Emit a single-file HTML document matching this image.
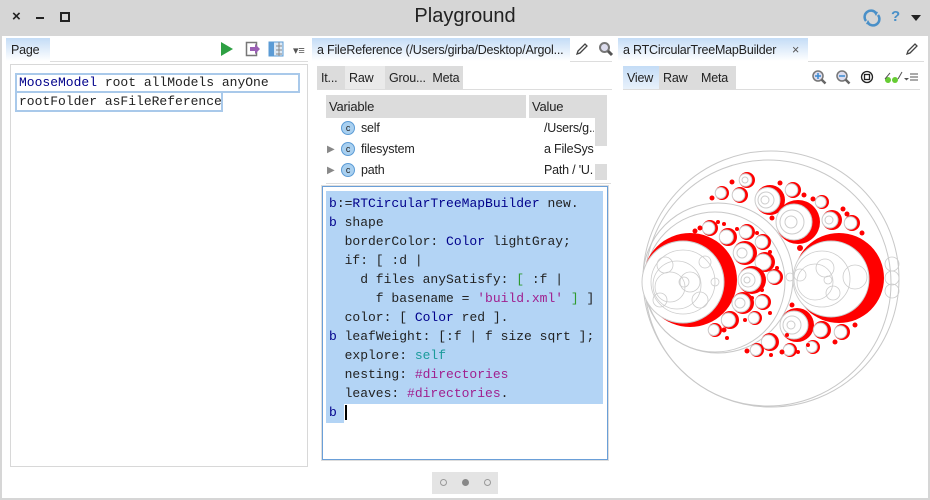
<!DOCTYPE html>
<html><head><meta charset="utf-8">
<style>
*{margin:0;padding:0;box-sizing:border-box}
body{width:930px;height:500px;overflow:hidden;background:#fff;font-family:"Liberation Sans","DejaVu Sans",sans-serif;position:relative;font-size:13px;color:#222;letter-spacing:-0.2px}
.abs{position:absolute;white-space:nowrap}
.tb{left:0;top:0;width:930px;height:36px;background:#d6d6d6}
.title{left:0;width:930px;top:5px;text-align:center;font-size:20px;color:#222;letter-spacing:0}
.frame{border:2px solid #d6d6d6;border-top:none;left:0;top:36px;width:930px;height:464px}
.tab{background:linear-gradient(#c4dcf6,#fff);height:23px;font-size:12.5px;padding:5px 0 0 5px;white-space:nowrap;overflow:hidden}
.hl{height:1px;background:#ddd}
.sub{height:23px;font-size:12.5px;padding:5px 4px 0;background:#dcdcdc;white-space:nowrap;overflow:hidden}
.mono{font-family:"Liberation Mono","DejaVu Sans Mono",monospace;font-size:13px;letter-spacing:0}
.code div{height:19px;line-height:19px;white-space:pre}
.k{color:#00008b}.g{color:#2e9a2e}.m{color:#a0208f}.t{color:#1b9b9b}
.val{position:absolute;left:218px;width:50px;overflow:hidden;white-space:nowrap}
</style></head><body>
<div class="abs tb"></div>
<div class="abs title">Playground</div>
<div class="abs" style="left:12px;top:8px;font-size:15px;font-weight:bold">×</div>
<div class="abs" style="left:36px;top:17px;width:8px;height:2px;background:#222"></div>
<div class="abs" style="left:60px;top:12px;width:10px;height:10px;border:2px solid #222"></div>
<svg class="abs" style="left:862px;top:9px" width="20" height="18"><path d="M4 12 A6 6 0 0 1 14 4 M16 6 A6 6 0 0 1 6 14" stroke="#4a90c8" stroke-width="2.5" fill="none"/><path d="M11 2 l5 1 -2 4z M9 16 l-5 -1 2 -4z" fill="#4a90c8"/></svg>
<div class="abs" style="left:891px;top:8px;font-size:15px;color:#4a90c8;font-weight:bold">?</div>
<div class="abs" style="left:911px;top:15px;width:0;height:0;border-left:5px solid transparent;border-right:5px solid transparent;border-top:6px solid #222"></div>
<div class="abs frame"></div>

<!-- left pane -->
<div class="abs tab" style="left:6px;top:38px;width:44px">Page</div>
<div class="abs hl" style="left:50px;top:61px;width:258px"></div>
<svg class="abs" style="left:219px;top:41px" width="16" height="16"><path d="M2 1 L14 8 L2 15z" fill="#2ea043"/></svg>
<svg class="abs" style="left:245px;top:41px" width="16" height="16"><rect x="1.5" y="1.5" width="10" height="13" fill="none" stroke="#777" stroke-width="1.5"/><path d="M5 6h5v-3l5 5-5 5v-3h-5z" fill="#9a5fb4"/></svg>
<svg class="abs" style="left:268px;top:41px" width="16" height="16"><rect x="1" y="1" width="14" height="14" fill="#dce8f4" stroke="#5b9bd5"/><rect x="1" y="1" width="5" height="14" fill="#5b9bd5"/><path d="M8 5h6M8 9h6M8 13h6M11 1v14" stroke="#888"/></svg>
<div class="abs" style="left:293px;top:44px;font-size:11px;color:#555">▾≡</div>
<div class="abs" style="left:10px;top:64px;width:298px;height:403px;border:1px solid #d8d8d8"></div>
<div class="abs mono code" style="left:15px;top:73px">
<div style="border:2px solid #a9c9ea;width:285px;height:20px;line-height:16px;padding-left:2px"><span class="k">MooseModel</span> root allModels anyOne</div>
<div style="border:2px solid #a9c9ea;border-top:none;width:208px;height:19px;line-height:17px;padding-left:2px">rootFolder asFileReference</div>
</div>

<!-- middle pane -->
<div class="abs tab" style="left:312px;top:38px;width:258px">a FileReference (/Users/girba/Desktop/Argol...</div>
<svg class="abs" style="left:575px;top:42px" width="14" height="14"><path d="M2 12 L3 9 L10 2 L12 4 L5 11z" fill="none" stroke="#444" stroke-width="1.3"/></svg>
<svg class="abs" style="left:598px;top:41px" width="16" height="16"><circle cx="6.5" cy="6.5" r="4.5" fill="#dde" stroke="#777" stroke-width="2"/><path d="M10 10 L14 14" stroke="#555" stroke-width="3"/></svg>
<div class="abs hl" style="left:570px;top:61px;width:42px"></div>
<div class="abs sub" style="left:317px;top:66px;width:28px">It...</div>
<div class="abs sub" style="left:345px;top:66px;width:40px;background:#eaeaea">Raw</div>
<div class="abs sub" style="left:385px;top:66px;width:78px">Grou... &nbsp;Meta</div>
<div class="abs hl" style="left:317px;top:89px;width:295px"></div>
<div class="abs" style="left:326px;top:95px;width:200px;height:23px;background:#dcdcdc;padding:4px 3px">Variable</div>
<div class="abs" style="left:529px;top:95px;width:66px;height:23px;background:#dcdcdc;padding:4px 3px">Value</div>
<div class="abs" style="left:595px;top:95px;width:12px;height:51px;background:#dcdcdc"></div>
<div class="abs" style="left:595px;top:164px;width:12px;height:16px;background:#dcdcdc"></div>
<div class="abs hl" style="left:326px;top:183px;width:285px"></div>
<div class="abs" style="left:326px;top:118px;width:268px;font-size:12.5px;line-height:21px">
<div style="height:21px;position:relative"><span class="abs" style="left:15px;top:3px;width:14px;height:14px;border-radius:50%;background:#a9d0f0;border:1px solid #5b9bd5;font-size:9px;line-height:12px;text-align:center">c</span><span class="abs" style="left:35px">self</span><span class="val">/Users/g..</span></div>
<div style="height:21px;position:relative"><span class="abs" style="left:1px;color:#888;font-size:10px">▶</span><span class="abs" style="left:15px;top:3px;width:14px;height:14px;border-radius:50%;background:#a9d0f0;border:1px solid #5b9bd5;font-size:9px;line-height:12px;text-align:center">c</span><span class="abs" style="left:35px">filesystem</span><span class="val">a FileSys..</span></div>
<div style="height:21px;position:relative"><span class="abs" style="left:1px;color:#888;font-size:10px">▶</span><span class="abs" style="left:15px;top:3px;width:14px;height:14px;border-radius:50%;background:#a9d0f0;border:1px solid #5b9bd5;font-size:9px;line-height:12px;text-align:center">c</span><span class="abs" style="left:35px">path</span><span class="val">Path / 'U..</span></div>
</div>
<div class="abs" style="left:322px;top:186px;width:286px;height:274px;border:1px solid #6a9fd8;outline:1px solid #ddd"></div>
<div class="abs" style="left:326px;top:191px;width:277px;height:213px;background:#b3d4f5"></div>
<div class="abs" style="left:326px;top:404px;width:18px;height:19px;background:#b3d4f5"></div>
<div class="abs mono code" style="left:329px;top:194px">
<div><span class="k">b</span>:=<span class="k">RTCircularTreeMapBuilder</span> new.</div>
<div><span class="k">b</span> shape</div>
<div>  borderColor: <span class="k">Color</span> lightGray;</div>
<div>  if: [ :d |</div>
<div>    d files anySatisfy: <span class="g">[</span> :f |</div>
<div>      f basename = <span class="m">'build.xml'</span> <span class="g">]</span> ]</div>
<div>  color: [ <span class="k">Color</span> red ].</div>
<div><span class="k">b</span> leafWeight: [:f | f size sqrt ];</div>
<div>  explore: <span class="t">self</span></div>
<div>  nesting: <span class="m">#directories</span></div>
<div>  leaves: <span class="m">#directories</span>.</div>
<div><span class="k">b</span> <span style="border-left:2px solid #000"></span></div>
</div>
<div class="abs" style="left:432px;top:472px;width:66px;height:22px;background:#e4e4e4"></div>
<div class="abs" style="left:440px;top:479px;width:7px;height:7px;border-radius:50%;border:1px solid #999"></div>
<div class="abs" style="left:462px;top:479px;width:7px;height:7px;border-radius:50%;background:#888"></div>
<div class="abs" style="left:484px;top:479px;width:7px;height:7px;border-radius:50%;border:1px solid #999"></div>

<!-- right pane -->
<div class="abs tab" style="left:618px;top:38px;width:190px">a RTCircularTreeMapBuilder <span style="position:absolute;left:174px;color:#555">×</span></div>
<div class="abs hl" style="left:808px;top:61px;width:116px"></div>
<svg class="abs" style="left:905px;top:42px" width="14" height="14"><path d="M2 12 L3 9 L10 2 L12 4 L5 11z" fill="none" stroke="#444" stroke-width="1.3"/></svg>
<div class="abs sub" style="left:623px;top:66px;width:36px;background:linear-gradient(#c4dcf6,#e8f1fb)">View</div>
<div class="abs sub" style="left:659px;top:66px;width:38px">Raw</div>
<div class="abs sub" style="left:697px;top:66px;width:39px">Meta</div>
<div class="abs hl" style="left:623px;top:89px;width:297px"></div>
<svg class="abs" style="left:810px;top:69px" width="110" height="18">
<circle cx="8" cy="7" r="5" fill="#dde" stroke="#777" stroke-width="1.5"/><path d="M5 7h6M8 4v6" stroke="#3a8ad0" stroke-width="1.5"/><path d="M11.5 10.5l4 4" stroke="#666" stroke-width="2.5"/>
<circle cx="32" cy="7" r="5" fill="#dde" stroke="#777" stroke-width="1.5"/><path d="M29 7h6" stroke="#3a8ad0" stroke-width="1.5"/><path d="M35.5 10.5l4 4" stroke="#666" stroke-width="2.5"/>
<circle cx="57" cy="8" r="5.5" fill="none" stroke="#222" stroke-width="1.3"/><rect x="54.5" y="5.5" width="5" height="5" fill="none" stroke="#222" stroke-width="1.3"/>
<circle cx="78" cy="11" r="3" fill="#6c3" /><circle cx="85" cy="11" r="3" fill="#6c3"/><path d="M75 10 L80 4 M88 10 L92 3" stroke="#555"/>
<path d="M94 9h5l-2.5 2.5z" fill="#555"/><path d="M100 5h8M100 8h8M100 11h8" stroke="#555"/>
</svg>
<svg class="abs" style="left:620px;top:140px" width="300" height="280" viewBox="620 140 300 280">
<g fill="none" stroke="#c8c8c8" stroke-width="1">
<circle cx="771" cy="279" r="128"/><circle cx="768" cy="283" r="123"/>
<circle cx="718" cy="278" r="75"/><circle cx="715" cy="282" r="70"/>
</g>
<g>
<circle cx="690" cy="280" r="47" fill="red"/><circle cx="683" cy="282" r="41" fill="#fff" stroke="#ccc"/>
<circle cx="839" cy="278" r="45" fill="red"/><circle cx="831" cy="279" r="38" fill="#fff" stroke="#ccc"/>
</g>
<g fill="none" stroke="#ccc" stroke-width="0.8">
<circle cx="683" cy="282" r="32"/><circle cx="677" cy="285" r="24"/><circle cx="670" cy="287" r="15"/><circle cx="690" cy="282" r="10"/><circle cx="684" cy="282" r="5"/><circle cx="665" cy="265" r="8"/><circle cx="700" cy="300" r="8"/><circle cx="705" cy="262" r="6"/><circle cx="660" cy="300" r="7"/><circle cx="715" cy="282" r="4"/>
<circle cx="822" cy="279" r="28"/><circle cx="815" cy="282" r="18"/><circle cx="825" cy="268" r="9"/><circle cx="855" cy="277" r="12"/><circle cx="833" cy="293" r="7"/><circle cx="800" cy="275" r="6"/><circle cx="828" cy="280" r="4"/>
<circle cx="892" cy="264" r="7"/><circle cx="892" cy="278" r="7"/><circle cx="892" cy="291" r="7"/><circle cx="790" cy="277" r="4"/>
</g>
<g>
<g transform="translate(747,180)"><circle r="8" fill="red"/><circle cx="-1.5" r="6.3" fill="#fff" stroke="#ccc"/><circle cx="-2" r="3" fill="none" stroke="#ccc"/></g>
<g transform="translate(770,200)"><circle r="15" fill="red"/><circle cx="-2.5" r="12.5" fill="#fff" stroke="#ccc"/><circle cx="-4" r="8" fill="none" stroke="#ccc"/><circle cx="-5" r="4" fill="none" stroke="#ccc"/></g>
<g transform="translate(793,190)"><circle r="8" fill="red"/><circle cx="-1.5" r="6.3" fill="#fff" stroke="#ccc"/></g>
<g transform="translate(722,193)"><circle r="7" fill="red"/><circle cx="-1.3" r="5.5" fill="#fff" stroke="#ccc"/></g>
<g transform="translate(740,195)"><circle r="8" fill="red"/><circle cx="-1.5" r="6.3" fill="#fff" stroke="#ccc"/></g>
<g transform="translate(798,222)"><circle r="22" fill="red"/><circle cx="-4" r="18" fill="#fff" stroke="#ccc"/><circle cx="-6" r="12" fill="none" stroke="#ccc"/><circle cx="-7" r="6" fill="none" stroke="#ccc"/></g>
<g transform="translate(822,202)"><circle r="7" fill="red"/><circle cx="-1.3" r="5.5" fill="#fff" stroke="#ccc"/></g>
<g transform="translate(832,220)"><circle r="10" fill="red"/><circle cx="-2" r="8" fill="#fff" stroke="#ccc"/><circle cx="-3" r="4" fill="none" stroke="#ccc"/></g>
<g transform="translate(852,223)"><circle r="8" fill="red"/><circle cx="-1.5" r="6.3" fill="#fff" stroke="#ccc"/></g>
<g transform="translate(710,228)"><circle r="8" fill="red"/><circle cx="-1.5" r="6.3" fill="#fff" stroke="#ccc"/></g>
<g transform="translate(728,237)"><circle r="9" fill="red"/><circle cx="-1.7" r="7" fill="#fff" stroke="#ccc"/></g>
<g transform="translate(747,232)"><circle r="8" fill="red"/><circle cx="-1.5" r="6.3" fill="#fff" stroke="#ccc"/></g>
<g transform="translate(763,242)"><circle r="8" fill="red"/><circle cx="-1.5" r="6.3" fill="#fff" stroke="#ccc"/></g>
<g transform="translate(745,253)"><circle r="12" fill="red"/><circle cx="-2" r="9.8" fill="#fff" stroke="#ccc"/><circle cx="-3" r="5" fill="none" stroke="#ccc"/></g>
<g transform="translate(765,262)"><circle r="10" fill="red"/><circle cx="-2" r="8" fill="#fff" stroke="#ccc"/></g>
<g transform="translate(752,280)"><circle r="14" fill="red"/><circle cx="-2.5" r="11.5" fill="#fff" stroke="#ccc"/><circle cx="-4" r="7" fill="none" stroke="#ccc"/><circle cx="-5" r="3" fill="none" stroke="#ccc"/></g>
<g transform="translate(775,277)"><circle r="8" fill="red"/><circle cx="-1.5" r="6.3" fill="#fff" stroke="#ccc"/></g>
<g transform="translate(743,303)"><circle r="11" fill="red"/><circle cx="-2" r="9" fill="#fff" stroke="#ccc"/><circle cx="-3" r="5" fill="none" stroke="#ccc"/></g>
<g transform="translate(763,302)"><circle r="8" fill="red"/><circle cx="-1.5" r="6.3" fill="#fff" stroke="#ccc"/></g>
<g transform="translate(755,318)"><circle r="7" fill="red"/><circle cx="-1.3" r="5.5" fill="#fff" stroke="#ccc"/></g>
<g transform="translate(730,320)"><circle r="9" fill="red"/><circle cx="-1.7" r="7" fill="#fff" stroke="#ccc"/></g>
<g transform="translate(715,330)"><circle r="7" fill="red"/><circle cx="-1.3" r="5.5" fill="#fff" stroke="#ccc"/></g>
<g transform="translate(797,325)"><circle r="17" fill="red"/><circle cx="-3" r="14" fill="#fff" stroke="#ccc"/><circle cx="-5" r="9" fill="none" stroke="#ccc"/><circle cx="-6" r="4" fill="none" stroke="#ccc"/></g>
<g transform="translate(822,330)"><circle r="9" fill="red"/><circle cx="-1.7" r="7" fill="#fff" stroke="#ccc"/></g>
<g transform="translate(842,332)"><circle r="8" fill="red"/><circle cx="-1.5" r="6.3" fill="#fff" stroke="#ccc"/></g>
<g transform="translate(770,342)"><circle r="9" fill="red"/><circle cx="-1.7" r="7" fill="#fff" stroke="#ccc"/></g>
<g transform="translate(757,350)"><circle r="7" fill="red"/><circle cx="-1.3" r="5.5" fill="#fff" stroke="#ccc"/></g>
<g transform="translate(790,350)"><circle r="7" fill="red"/><circle cx="-1.3" r="5.5" fill="#fff" stroke="#ccc"/></g>
<g transform="translate(813,347)"><circle r="7" fill="red"/><circle cx="-1.3" r="5.5" fill="#fff" stroke="#ccc"/></g>
</g>
<g fill="red">
<circle cx="712" cy="198" r="2.5"/><circle cx="732" cy="182" r="2.5"/><circle cx="780" cy="183" r="2.5"/><circle cx="804" cy="195" r="2.5"/><circle cx="813" cy="199" r="2.5"/><circle cx="843" cy="209" r="2.5"/><circle cx="847" cy="214" r="2.5"/><circle cx="862" cy="233" r="2.5"/><circle cx="772" cy="218" r="2.5"/><circle cx="800" cy="248" r="3"/>
<circle cx="695" cy="231" r="2.5"/><circle cx="700" cy="228" r="2.5"/><circle cx="718" cy="222" r="2"/><circle cx="724" cy="224" r="2"/><circle cx="737" cy="229" r="2"/><circle cx="757" cy="233" r="2"/><circle cx="770" cy="252" r="2"/><circle cx="777" cy="268" r="2"/><circle cx="762" cy="290" r="2"/><circle cx="770" cy="313" r="2"/><circle cx="724" cy="330" r="2.5"/><circle cx="727" cy="338" r="2"/><circle cx="745" cy="320" r="2"/><circle cx="752" cy="298" r="2"/>
<circle cx="792" cy="305" r="2.5"/><circle cx="787" cy="335" r="2"/><circle cx="808" cy="345" r="2"/><circle cx="835" cy="342" r="2.5"/><circle cx="855" cy="325" r="2.5"/><circle cx="747" cy="351" r="2.5"/><circle cx="771" cy="355" r="2"/><circle cx="782" cy="352" r="2.5"/><circle cx="798" cy="352" r="2"/>
</g>
</svg>
</body></html>
